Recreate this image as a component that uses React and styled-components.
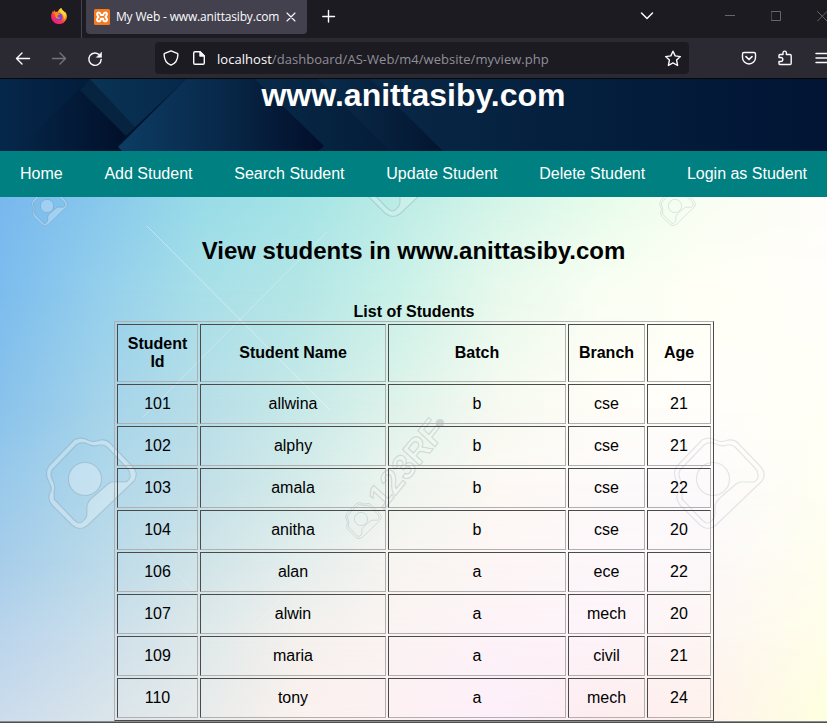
import React from "react";
import styled, { createGlobalStyle, css } from "styled-components";

const GlobalStyle = createGlobalStyle`
  html, body { margin: 0; padding: 0; overflow: hidden; }
  * { box-sizing: border-box; }
`;

const Window = styled.div`
  width: 827px;
  height: 723px;
  display: flex;
  flex-direction: column;
  overflow: hidden;
  background: #1c1b22;
  font-family: "Liberation Sans", Arial, sans-serif;
`;

/* ---------- browser chrome ---------- */
const TabStrip = styled.div`
  flex: 0 0 38px;
  display: flex;
  align-items: flex-start;
  background: #1c1b22;
  color: #fbfbfe;
`;

const PinnedTab = styled.div`
  flex: none;
  width: 82px;
  height: 38px;
  padding: 8px 0 0 51px;
  border-right: 1px solid #45444e;
`;

const ActiveTab = styled.div`
  flex: none;
  width: 221px;
  height: 34px;
  margin-left: 4px;
  padding-left: 8px;
  display: flex;
  align-items: center;
  border-radius: 0 0 4px 4px;
  background: #42414d;
`;

const TabTitle = styled.span`
  width: 164px;
  margin: 0 6px 0 6px;
  font: 12px/18px "Open Sans", "Noto Sans", sans-serif;
  letter-spacing: -0.17px;
  white-space: nowrap;
`;

const Icon = styled.svg`
  display: block;
  flex: none;
  width: ${(p) => p.$w || 16}px;
  height: ${(p) => p.$h || 16}px;
  margin-left: ${(p) => p.$left || 0}px;
  margin-top: ${(p) => p.$top || 0}px;
  fill: none;
  stroke: ${(p) => p.$color || "#fbfbfe"};
  stroke-width: ${(p) => p.$weight || 1.4};
  stroke-linecap: round;
  stroke-linejoin: round;
`;

const Toolbar = styled.div`
  flex: 0 0 41px;
  display: flex;
  align-items: flex-start;
  background: #2b2a33;
  border-bottom: 1px solid #08080b;
`;

const AddressBar = styled.div`
  flex: none;
  display: flex;
  align-items: flex-start;
  width: 534px;
  height: 32px;
  margin: 4px 0 0 52px;
  border-radius: 4px;
  background: #1c1b22;
`;

const Url = styled.span`
  width: 448px;
  padding: 8px 0 0 11px;
  font: 13px/18px "Open Sans", "Noto Sans", sans-serif;
  letter-spacing: 0.04px;
  color: #8f8f98;
  white-space: nowrap;
  b { font-weight: 400; color: #fbfbfe; }
`;

/* ---------- page ---------- */
const Page = styled.main`
  flex: 1;
  min-height: 0;
  display: flex;
  flex-direction: column;
`;

const Banner = styled.header`
  position: relative;
  flex: 0 0 72px;
  background: #04203c;
`;

const Backdrop = styled.svg`
  position: absolute;
  inset: 0;
  display: block;
`;

const SiteName = styled.h1`
  position: relative;
  margin: 0;
  font-size: 32px;
  line-height: 33px;
  text-align: center;
  color: #fff;
`;

const Nav = styled.nav`
  flex: 0 0 46px;
  display: flex;
  justify-content: space-between;
  align-items: center;
  padding: 0 20px 1px;
  background: #008080;
`;

const NavLink = styled.a`
  font-size: 16px;
  line-height: 18px;
  color: #fff;
  white-space: nowrap;
`;

const Content = styled.section`
  position: relative;
  flex: 1;
  min-height: 0;
  overflow: hidden;
`;

const Heading = styled.h2`
  position: relative;
  margin: 0;
  padding-top: 40px;
  font-size: 24px;
  line-height: 28px;
  text-align: center;
  color: #000;
`;

const StudentTable = styled.table`
  position: relative;
  table-layout: fixed;
  width: 600px;
  margin: 38px 0 0 114px;
  border: 1px solid;
  border-color: #b0b0b0 #4a4a4a #4a4a4a #b0b0b0;
  border-spacing: 2px;
  border-collapse: separate;
  font-size: 16px;
  line-height: 18px;
  color: #000;
`;

const Caption = styled.caption`
  height: 18px;
  padding: 0;
  font-weight: bold;
  line-height: 18px;
`;

const cell = css`
  text-align: center;
  vertical-align: middle;
  border: 1px solid;
  border-color: #4a4a4a #b0b0b0 #b0b0b0 #4a4a4a;
`;

const HeadCell = styled.th`
  ${cell}
  width: ${(p) => p.$w}px;
  height: 58px;
  padding: 0 9px;
`;

const Cell = styled.td`
  ${cell}
  height: 40px;
  padding: 0 0 1px;
`;

const BottomEdge = styled.div`
  flex: 0 0 2px;
  background: #4c5052;
  border-top: 1px solid #8b8f90;
`;

/* ---------- data ---------- */
const LINKS = ["Home", "Add Student", "Search Student", "Update Student", "Delete Student", "Login as Student"];

const COLUMNS = [
  ["Student Id", 81],
  ["Student Name", 186],
  ["Batch", 178],
  ["Branch", 77],
  ["Age", 64],
];

const STUDENTS = [
  [101, "allwina", "b", "cse", 21],
  [102, "alphy", "b", "cse", 21],
  [103, "amala", "b", "cse", 22],
  [104, "anitha", "b", "cse", 20],
  [106, "alan", "a", "ece", 22],
  [107, "alwin", "a", "mech", 20],
  [109, "maria", "a", "civil", 21],
  [110, "tony", "a", "mech", 24],
];

/* Colour grid of the page backdrop: each row blends into the next. */
const GRID_X = [0, 100, 200, 300, 400, 500, 600, 700, 827];
const GRID = [
  [0, "78b8ee 88c8ec 98dce8 a4e4e6 bcece6 d4f5e9 e6fcea f8fef2 fffdfa"],
  [93, "7cbcee 94cfec a8dfe8 b4e6e6 caf1e8 e8f9ec f9fef3 fffff5 fffefa"],
  [203, "88c2eb a3d3ea b6dee8 c6e9e8 def3ea f6faf1 fffdf6 fffefa fffff6"],
  [283, "98c9eb afd7ea c1dfe8 d4ebe9 eef5ef fdf9f4 fdfafa fdfafc fffff3"],
  [363, "a6cdea badae9 cfe4e8 e4eeed f8f5f1 fdf6f5 fdf7fa fcf8fa fffeee"],
  [443, "bbd5ec ccdfeb dfe9ea f5f1ed fbf3f3 fdf2f8 fdf3f8 fdf5f3 fffee8"],
  [524, "ccdcec dae4ea e8ebeb fbf1ee fdf0f3 fdeffa fdecee fff1ec feffde"],
];

function Camera({ x = 0, y = 0, scale = 1, fill = 0, line = 0.16 }) {
  return (
    <g
      transform={`translate(${x} ${y}) scale(${scale})`}
      stroke={`rgba(70,95,110,${line})`}
      strokeWidth={1.2 / Math.sqrt(scale)}
      strokeLinejoin="round"
    >
      <path
        fill={`rgba(255,255,255,${fill})`}
        fillRule="evenodd"
        d="M-11 -39Q-5 -42 0 -40L5 -38Q8 -37 12 -38Q20 -41 25 -36L47 -13Q54 -6 49 2L3 46Q-5 53 -13 46L-33 26Q-38 20 -35 14Q-32 10 -36 3Q-41 -6 -36 -13ZM-9 -34L-33 -9Q-35 -5 -33 0Q-29 7 -31 12L-31 20L-11 41Q-5 47 -1 41Q2 39 2 34V27Q3 22 8 18L23 5Q27 2 33 3L41 3Q46 0 45 -4Q45 -8 42 -11L22 -32Q18 -35 14 -34Q8 -32 3 -35Q-4 -38 -9 -34Z"
      />
      <circle r="16.5" fill={`rgba(255,255,255,${fill})`} />
    </g>
  );
}

function PageBackdrop() {
  return (
    <Backdrop width="827" height="524" viewBox="0 0 827 524" aria-hidden="true">
      <defs>
        {GRID.map(([y, colors], i) => (
          <React.Fragment key={y}>
            <linearGradient id={`row${i}`} gradientUnits="userSpaceOnUse" x1="0" x2="827" y1="0" y2="0">
              {colors.split(" ").map((c, k) => (
                <stop key={k} offset={GRID_X[k] / 827} stopColor={`#${c}`} />
              ))}
            </linearGradient>
            {i > 0 && (
              <>
                <linearGradient id={`fade${i}`} gradientUnits="userSpaceOnUse" x1="0" x2="0" y1={GRID[i - 1][0]} y2={y}>
                  <stop offset="0" stopColor="#fff" stopOpacity="0" />
                  <stop offset="1" stopColor="#fff" />
                </linearGradient>
                <mask id={`mask${i}`} maskUnits="userSpaceOnUse" x="0" y="0" width="827" height="524">
                  <rect width="827" height="524" fill={`url(#fade${i})`} />
                </mask>
              </>
            )}
          </React.Fragment>
        ))}
      </defs>
      {GRID.map(([y], i) => (
        <rect key={y} width="827" height="524" fill={`url(#row${i})`} mask={i ? `url(#mask${i})` : undefined} />
      ))}
      <g stroke="#fff" fill="none">
        <path d="M147 29L330 213" strokeOpacity=".4" />
        <path d="M327 35L143 220" strokeOpacity=".28" />
        <path d="M143 343L195 395M250 433L290 393" strokeOpacity=".16" />
      </g>
      <Camera x={85} y={282} fill={0.3} line={0.18} />
      <Camera x={713} y={282} line={0.14} />
      <Camera x={47} y={9} scale={0.4} fill={0.26} line={0.24} />
      <Camera x={675} y={9} scale={0.4} line={0.2} />
      <Camera x={398} y={-30} line={0.18} fill={0.2} />
      <Camera x={361} y={322} scale={0.4} line={0.22} />
      <text
        transform="translate(383 314) rotate(-51) skewX(-4)"
        fontFamily="Liberation Sans, Arial, sans-serif"
        fontWeight="bold"
        fontSize="34"
        textLength="101"
        lengthAdjust="spacingAndGlyphs"
        fill="rgba(255,255,255,.12)"
        stroke="rgba(70,80,80,.18)"
        strokeWidth="1.2"
      >
        123RF
      </text>
      <circle cx="440" cy="226" r="4" fill="rgba(90,100,100,.2)" />
    </Backdrop>
  );
}

function BannerBackdrop() {
  const gradients = [
    ["bLeft", 0, 120, "#06284a", "#01112c"],
    ["bBand", 80, 190, "#0a3455", "#06284a"],
    ["bMain", 118, 320, "#0d3c63", "#020f2a"],
    ["bSide", 180, 390, "#0a3252", "#041c38"],
    ["bNext", 318, 443, "#0a2c4c", "#03152f"],
    ["bRight", 370, 827, "#082846", "#011434"],
  ];
  return (
    <Backdrop width="827" height="72" viewBox="0 0 827 72" aria-hidden="true">
      <defs>
        {gradients.map(([id, x1, x2, from, to]) => (
          <linearGradient key={id} id={id} gradientUnits="userSpaceOnUse" x1={x1} x2={x2} y1="0" y2="0">
            <stop offset="0" stopColor={from} />
            {id === "bMain" && <stop offset=".5" stopColor="#08294a" />}
            <stop offset="1" stopColor={to} />
          </linearGradient>
        ))}
      </defs>
      <rect width="827" height="72" fill="url(#bRight)" />
      <path d="M0 0H370L443 72H0Z" fill="url(#bNext)" />
      <path d="M0 0H318L390 72H0Z" fill="url(#bSide)" />
      <path d="M0 0H255L324 67L318 72H0Z" fill="url(#bMain)" />
      <path d="M0 0H186L118 68L122 72H0Z" fill="url(#bLeft)" />
      <path d="M0 0H90L15 72H0Z" fill="#06294a" fillOpacity=".35" />
      <path d="M90 0H186L126 57L80 11Z" fill="#062440" />
      <path d="M90 0H186L135 48Z" fill="url(#bBand)" />
    </Backdrop>
  );
}

function FirefoxIcon() {
  return (
    <Icon viewBox="0 0 16 16" $color="none">
      <defs>
        <linearGradient id="fox" x1=".9" y1=".1" x2=".25" y2="1">
          <stop offset="0" stopColor="#fff44f" />
          <stop offset=".35" stopColor="#ff980e" />
          <stop offset=".65" stopColor="#ff3750" />
          <stop offset="1" stopColor="#e31587" />
        </linearGradient>
      </defs>
      <path fill="url(#fox)" d="M10.2 0C10.4 1.8 13 3 14.2 4.7L14.1 3.8C16 6 16.5 9.3 15 12A8 8 0 0 1 1 12C-.4 9.4.1 6.3 1.2 4.5L1.5 3.1L2.3 4L3.4 2.1L4 3.8H6.5C7.5 2.2 8.5.8 10.2 0Z" />
      <circle cx="8" cy="8.9" r="3.6" fill="#7845dd" />
      <path fill="#ff8a16" d="M3.6 5.3C5 4.5 6.4 4.8 7.7 5.8L9 6.1C8.3 7.5 6.7 6.9 6.5 8C6.3 9.5 8.2 10 9.7 9.4C8.8 11.3 5.8 11 4.8 9.4C4 8.2 4.2 6.8 3.6 5.3Z" />
      <path fill="#ffd43b" d="M10.2 0C10.4 1.8 13 3 14.1 4.8C15.2 6.6 14.5 9.8 13 11.3C13.4 8 11.8 5.9 9.6 4.8C8.3 3.9 9 1 10.2 0Z" />
    </Icon>
  );
}

function XamppIcon() {
  return (
    <Icon viewBox="0 0 16 16" $color="none">
      <rect width="16" height="16" rx="1.5" fill="#f47b20" />
      <path
        d="M5.2 3.7C3.5 3.3 2.8 4.5 3.2 5.7C3.4 6.5 3.9 7 4.5 8C3.5 9 3 9.6 3 10.6C3 12 4.2 12.6 5.6 12.2M5.2 3.7C6.5 3.8 6.5 5.2 6.8 6H9.2C9.5 5.2 9.5 3.8 10.8 3.7C12.5 3.3 13.2 4.5 12.8 5.7C12.6 6.5 12.1 7 11.5 8C12.5 9 13 9.6 13 10.6C13 12 11.8 12.6 10.4 12.2C9.1 12 9.5 10.6 9.2 9.8H6.8C6.5 10.6 6.9 12 5.6 12.2"
        stroke="#fff"
        strokeWidth="2"
        fill="none"
      />
    </Icon>
  );
}

function BrowserTabs() {
  return (
    <TabStrip>
      <PinnedTab><FirefoxIcon /></PinnedTab>
      <ActiveTab>
        <XamppIcon />
        <TabTitle>My Web - www.anittasiby.com</TabTitle>
        <Icon $w={10} $h={10} $weight={1.1} viewBox="0 0 10 10"><path d="M1 1L9 9M9 1L1 9" /></Icon>
      </ActiveTab>
      <Icon $w={14} $h={14} $left={15} $top={9} $weight={1.4} viewBox="0 0 14 14"><path d="M6.5 1.5V13M.8 7.5H12.5" /></Icon>
      <Icon $w={14} $h={10} $left={304} $top={11} $weight={1.5} viewBox="0 0 14 10"><path d="M1.5 2L7 7.5L12.5 2" /></Icon>
      <Icon $w={10} $h={10} $left={71} $top={11} $weight={1} $color="#67666e" viewBox="0 0 10 10"><path d="M0 4.5H10" /></Icon>
      <Icon $w={10} $h={10} $left={36} $top={11} $weight={1} $color="#67666e" viewBox="0 0 10 10"><path d="M.5 .5H9.5V9.5H.5Z" /></Icon>
      <Icon $w={11} $h={11} $left={36} $top={11} $weight={1} $color="#67666e" viewBox="0 0 11 11"><path d="M.5 .5L10 10M10 .5L.5 10" /></Icon>
    </TabStrip>
  );
}

function BrowserToolbar() {
  return (
    <Toolbar>
      <Icon $left={15} $top={13} viewBox="0 0 16 16"><path d="M14.5 7.5H1.5M7 2L1.5 7.5L7 13" /></Icon>
      <Icon $left={20} $top={13} $color="#74737b" viewBox="0 0 16 16"><path d="M1.5 7.5H14.5M9 2L14.5 7.5L9 13" /></Icon>
      <Icon $left={20} $top={13} viewBox="0 0 16 16">
        <path d="M12.8 4.2A6.2 6.2 0 1 0 14.2 8.4" />
        <path d="M14.5 1.5V6.3H9.7Z" fill="#fbfbfe" strokeWidth=".6" />
      </Icon>
      <AddressBar>
        <Icon $left={8} $top={8} viewBox="0 0 16 16"><path d="M8 .8L14.3 3.4Q15 3.7 14.9 4.5C14.8 9 12.5 13.5 8 15.2C3.5 13.5 1.2 9 1.1 4.5Q1 3.7 1.7 3.4Z" /></Icon>
        <Icon $w={14} $h={16} $left={13} $top={8} viewBox="0 0 14 16">
          <path d="M3 1.7H8L12.3 6V13Q12.3 14.3 11 14.3H3Q1.7 14.3 1.7 13V3Q1.7 1.7 3 1.7Z" />
          <path d="M8 1.7V6H12.3Z" fill="#fbfbfe" />
        </Icon>
        <Url><b>localhost</b>/dashboard/AS-Web/m4/website/myview.php</Url>
        <Icon $w={18} $h={17} $top={8} $left={10} viewBox="0 0 18 17">
          <path d="M9 1.2L11.2 5.9L16.4 6.6L12.6 10.1L13.6 15.5L9 12.9L4.4 15.5L5.4 10.1L1.6 6.6L6.8 5.9Z" />
        </Icon>
      </AddressBar>
      <Icon $left={52} $top={12} viewBox="0 0 16 16">
        <path d="M3 2.5H13Q14.5 2.5 14.5 4V7.5A6.5 6.5 0 0 1 1.5 7.5V4Q1.5 2.5 3 2.5Z" />
        <path d="M5 6.7L8 9.5L11 6.7" strokeWidth="1.7" />
      </Icon>
      <Icon $left={20} $top={12} viewBox="0 0 16 16">
        <path d="M2 7.5V5.4Q2 4.5 3 4.5H6V2.8A1.7 1.7 0 0 1 9.4 2.8V4.5H13Q14.2 4.5 14.2 5.7V13.2Q14.2 14.5 13 14.5H3Q2 14.5 2 13.5V11.5H3.8A2 2 0 0 0 3.8 7.5Z" />
      </Icon>
      <Icon $left={22} $top={12} viewBox="0 0 16 16"><path d="M1 3.5H15M1 8H15M1 12.5H15" /></Icon>
    </Toolbar>
  );
}

export default function App() {
  return (
    <Window>
      <GlobalStyle />
      <BrowserTabs />
      <BrowserToolbar />
      <Page>
        <Banner>
          <BannerBackdrop />
          <SiteName>www.anittasiby.com</SiteName>
        </Banner>
        <Nav>
          {LINKS.map((label) => <NavLink key={label}>{label}</NavLink>)}
        </Nav>
        <Content>
          <PageBackdrop />
          <Heading>View students in www.anittasiby.com</Heading>
          <StudentTable>
            <Caption>List of Students</Caption>
            <thead>
              <tr>{COLUMNS.map(([label, width]) => <HeadCell key={label} $w={width}>{label}</HeadCell>)}</tr>
            </thead>
            <tbody>
              {STUDENTS.map((row) => (
                <tr key={row[0]}>{row.map((value, i) => <Cell key={i}>{value}</Cell>)}</tr>
              ))}
            </tbody>
          </StudentTable>
        </Content>
      </Page>
      <BottomEdge />
    </Window>
  );
}
